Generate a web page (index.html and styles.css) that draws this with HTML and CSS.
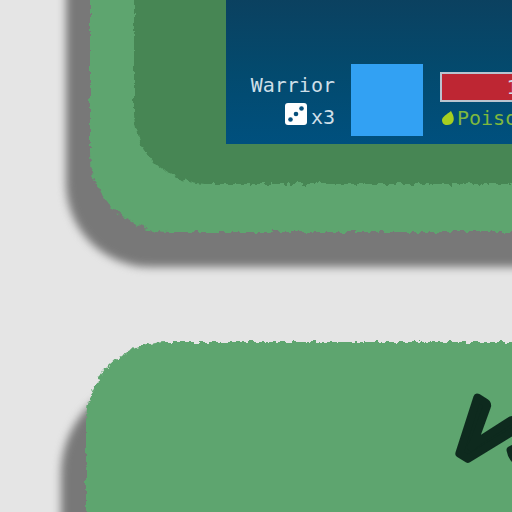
FILE: index.html
```
<!DOCTYPE html>
<html lang="en">
<head>
<meta charset="utf-8">
<title>Battle</title>
<link rel="stylesheet" href="styles.css">
</head>
<body>
<svg class="defs" width="0" height="0" aria-hidden="true">
  <filter id="rough" x="-5%" y="-5%" width="110%" height="110%" color-interpolation-filters="sRGB">
    <feTurbulence type="fractalNoise" baseFrequency="0.16" numOctaves="3" seed="4" result="n"/>
    <feDisplacementMap in="SourceGraphic" in2="n" scale="8" xChannelSelector="R" yChannelSelector="G"/>
    <feGaussianBlur stdDeviation="0.6"/>
  </filter>
</svg>
<main class="page">
  <section class="card card-battle">
    <div class="frame">
      <div class="scene">
        <div class="fighter">
          <div class="identity">
            <span>Warrior</span>
            <span class="dice">
              <svg width="22" height="22" viewBox="0 0 22 22" aria-hidden="true">
                <rect width="22" height="22" rx="3" fill="#fff"/>
                <g fill="#07507c"><circle cx="16.500" cy="5.500" r="2.300"/><circle cx="11" cy="11" r="2.300"/><circle cx="5.500" cy="16.500" r="2.300"/></g>
              </svg>
              <span class="count">x3</span>
            </span>
          </div>
          <div class="portrait"></div>
          <div class="status">
            <div class="health">10/10</div>
            <div class="effect">
              <svg width="14" height="16" viewBox="0 0 14 16" aria-hidden="true">
                <path fill="#a6cf20" d="M10 1 L12 5 C13 8 13 10 12 12 C11 14 9 15 6 15 C3 15 1 13 1 10 C1 7 6 4 10 1Z"/>
              </svg>
              <span>Poison</span>
            </div>
          </div>
        </div>
      </div>
    </div>
  </section>
  <section class="card card-versus">
    <h2 class="versus">
      <svg width="160" height="120" viewBox="0 0 160 120">
        <text class="lettering" x="0" y="78" transform="rotate(32 0 78)">v<tspan dx="7" dy="-24">s</tspan></text>
      </svg>
    </h2>
  </section>
</main>
</body>
</html>
```
FILE: styles.css
```
* { box-sizing: border-box; }

body {
  margin: 0;
  background: #e5e5e5;
  overflow: hidden;
  font-family: "DejaVu Sans Mono", monospace;
  font-size: 20px;
  line-height: 32px;
  color: #cfdfe8;
}

.defs { position: absolute; }

.page {
  display: flex;
  flex-direction: column;
  gap: 110px;
  height: 100vh;
  overflow: hidden;
  padding-left: 88px;
}

.card {
  position: relative;
  isolation: isolate;
  flex: none;
}

.card::before,
.card::after,
.frame::before {
  content: "";
  position: absolute;
  z-index: -1;
}

/* Hard drop shadow, down and to the left */
.card::before {
  background: #787878;
  filter: blur(4px);
}

.card::after {
  background: #5ea56f;
  filter: url(#rough);
}

.card-battle { padding: 0 0 48px 46px; }

.card-battle::before {
  inset: -40px -40px -35px -22px;
  border-radius: 0 0 0 84px;
}

.card-battle::after {
  inset: -40px -40px 0 2px;
  border-radius: 0 0 0 80px;
}

.frame {
  position: relative;
  isolation: isolate;
  padding: 0 0 40px 92px;
}

.frame::before {
  inset: -40px -40px 0 0;
  border-radius: 0 0 0 72px;
  background: #478654;
  filter: url(#rough);
}

.scene {
  padding: 64px 0 8px;
  background: linear-gradient(#0b4160, #034a6e 50%, #00507e);
}

.fighter {
  display: grid;
  grid-template-columns: 109px 72px 194px;
  gap: 16px;
}

.identity {
  display: flex;
  flex-direction: column;
  align-items: flex-end;
  padding-top: 5px;
}

.dice {
  display: flex;
  gap: 4px;
}

.dice svg { margin-top: 2px; }

.portrait {
  height: 72px;
  background: #32a1f3;
}

.status { padding: 8px 0 0 1px; }

.health {
  height: 30px;
  border: 2px solid #b9c4d0;
  background: #be2633;
  line-height: 26px;
  text-align: center;
}

.effect {
  display: flex;
  align-items: center;
  gap: 2px;
  padding-left: 1px;
  color: #7fb83e;
}

.card-versus { height: 320px; }

.card-versus::before {
  inset: 36px -40px -35px -27px;
  border-radius: 96px 0 0 0;
}

.card-versus::after {
  inset: 0 -40px 0 -2px;
  border-radius: 80px 0 0 0;
}

.versus {
  margin: 0;
  padding: 24px 0 0 356px;
}

.versus svg {
  display: block;
  overflow: visible;
}

.lettering {
  font: italic 600 112px Lato, sans-serif;
  fill: #0e2a1e;
  stroke: #0e2a1e;
  stroke-width: 8px;
  stroke-linejoin: round;
}
```
